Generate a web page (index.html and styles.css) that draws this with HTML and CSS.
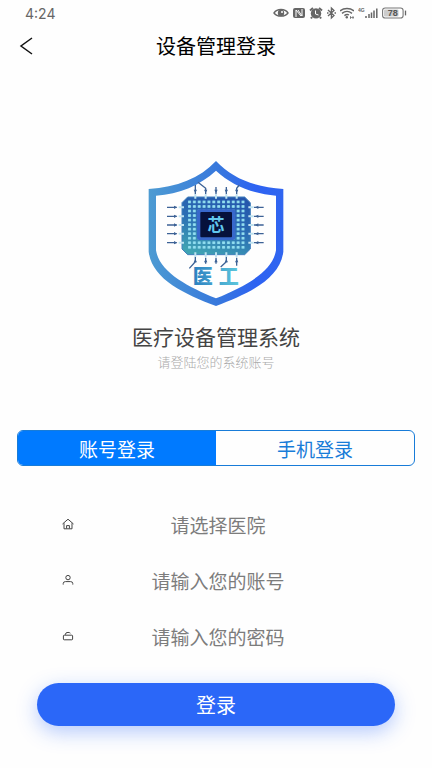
FILE: index.html
```
<!DOCTYPE html>
<html lang="zh-CN">

<head>
    <meta charset="UTF-8">
    <meta name="viewport" content="width=device-width, initial-scale=1.0">
    <title>设备管理登录</title>
    <link rel="stylesheet" href="styles.css">
</head>

<body>
    <div class="status-bar">
        <span class="time">4:24</span>
        <div class="status-icons">
            <svg width="16" height="14" viewBox="0 0 16 14">
                <path d="M1 7C4 2.4 12 2.4 15 7C12 11.2 4 11.2 1 7Z" fill="none" stroke="#666" stroke-width="1.4" />
                <circle cx="8" cy="7" r="3.2" fill="#666" />
                <circle cx="9" cy="6" r="1" fill="#fff" />
            </svg>
            <svg width="12" height="14" viewBox="0 0 12 14">
                <rect y="2" width="12" height="10" rx="2" fill="#666" />
                <path d="M3 11V4L8 10M5 4L9 10V3" fill="none" stroke="#fff" />
            </svg>
            <svg width="14" height="14" viewBox="0 0 14 14">
                <circle cx="7" cy="7.4" r="5.2" fill="#666" />
                <path d="M1 4.5L4 2M13 4.5L10 2M3 11L2 12.5M11 11L12 12.5" stroke="#666" stroke-width="2" />
                <path d="M6.5 4.5V8L9.5 9" fill="none" stroke="#fff" />
            </svg>
            <svg width="9" height="14" viewBox="0 0 9 14">
                <path d="M1 4L7 9.6L4.4 12V2L7 4.4L1 10M0 7H1.5M7.5 7H9" fill="none" stroke="#666" stroke-width="1.3" />
            </svg>
            <svg width="14" height="14" viewBox="0 0 14 14">
                <path d="M0 5C4 1.6 10 1.6 14 5M2 7.4C5 5 9 5 12 7.4M4.4 9.6C6 8.4 8 8.4 9 9" fill="none" stroke="#666" stroke-width="1.4" />
                <circle cx="6.8" cy="11.2" r="1.2" fill="#666" />
                <path d="M10 11.5H14M10.5 10V13M13 10V13" stroke="#666" stroke-width="0.7" />
            </svg>
            <svg width="20" height="14" viewBox="0 0 20 14">
                <text class="net" x="0" y="6">4G</text>
                <path d="M8 12V10M11 12V8M13.5 12V6.5M16 12V4.5M18.8 12V2.5" stroke="#666" stroke-width="1.5" />
            </svg>
            <svg width="25" height="14" viewBox="0 0 25 14">
                <rect x="0.6" y="2" width="20.5" height="10" rx="2.6" fill="#fff" stroke="#777" stroke-width="1.1" />
                <rect x="2" y="3.4" width="14.5" height="7.2" rx="1" fill="#ccc" />
                <path d="M23.5 4.6V9.4" stroke="#666" stroke-width="1.3" />
                <text class="battery" x="10.8" y="10.2">78</text>
            </svg>
        </div>
    </div>

    <header class="nav">
        <button type="button" class="back" aria-label="返回">
            <svg width="14" height="18" viewBox="0 0 14 18">
                <path d="M13 1L2 9L13 17" fill="none" stroke="#111" stroke-width="1.5" />
            </svg>
        </button>
        <h1>设备管理登录</h1>
    </header>

    <main>
        <div class="brand">
            <svg class="logo" width="152" height="155" viewBox="0 0 456 465">
                <defs>
                    <linearGradient id="shield" x1="0" x2="1">
                        <stop offset="0" stop-color="#4d9bd2" />
                        <stop offset="0.5" stop-color="#3879dc" />
                        <stop offset="0.8" stop-color="#2d62f2" />
                        <stop offset="1" stop-color="#3065f0" />
                    </linearGradient>
                    <linearGradient id="chip" x1="0.7" y1="0" x2="0.3" y2="1">
                        <stop offset="0" stop-color="#2456ac" />
                        <stop offset="0.5" stop-color="#2b6fb4" />
                        <stop offset="1" stop-color="#3fa3b3" />
                    </linearGradient>
                    <linearGradient id="word" x1="0" x2="1">
                        <stop offset="0" stop-color="#2b7fc0" />
                        <stop offset="1" stop-color="#5cc6dc" />
                    </linearGradient>
                    <pattern id="dots" x="141" y="134" width="14.6" height="13.6" patternUnits="userSpaceOnUse">
                        <rect x="3" y="2.5" width="9" height="8.5" rx="2" fill="#92dff0" />
                    </pattern>
                </defs>
                <path d="M228 18C180 70 110 97 26 102V290C36 372 130 416 228 453C326 416 420 372 430 290V102C346 97 276 70 228 18ZM228 47C276 91 338 117 408 122V286C398 350 316 394 228 430C140 394 58 350 48 286V122C118 117 180 91 228 47Z" fill="url(#shield)" fill-rule="evenodd" />
                <!-- pins -->
                <g fill="none" stroke="#3c6296" stroke-width="4">
                    <path d="M166 90V118M174 82L197 100V118M228 96V118M259 96V118M298 90L290 100V118" />
                    <path d="M166 306V320L148 340M197 308V326M228 308V326M259 306V320L242 336M290 308V332" />
                    <path d="M81 157H110M81 184H110M81 210H110M81 236H110M81 263H110" />
                    <path d="M342 157H371M342 184H371M342 210H371M342 236H371M342 263H371" />
                </g>
                <g fill="#3c6296">
                    <path d="M161 104h10l-5 10zM192 104h10l-5 10zM223 104h10l-5 10zM254 104h10l-5 10zM285 104h10l-5 10z" />
                    <path d="M161 322h10l-5-10zM192 322h10l-5-10zM223 322h10l-5-10zM254 322h10l-5-10zM285 322h10l-5-10z" />
                    <path d="M102 152v10l10-5zM102 179v10l10-5zM102 205v10l10-5zM102 231v10l10-5zM102 258v10l10-5z" />
                    <path d="M355 152v10l-10-5zM355 179v10l-10-5zM355 205v10l-10-5zM355 231v10l-10-5zM355 258v10l-10-5z" />
                </g>
                <path d="M143 126H314L331 143V282L314 299H143L126 282V143Z" fill="url(#chip)" stroke="#4380bd" stroke-width="3" />
                <rect x="141" y="134" width="175.2" height="149.6" fill="url(#dots)" />
                <g stroke="#bfe3f1" stroke-width="6">
                    <path d="M166 118V131M197 118V131M228 118V131M259 118V131M290 118V131" />
                    <path d="M166 292V306M197 292V306M228 292V306M259 292V306M290 292V306" />
                    <path d="M116 157H132M116 184H132M116 210H132M116 236H132M116 263H132" />
                    <path d="M325 157H341M325 184H341M325 210H341M325 236H341M325 263H341" />
                </g>
                <rect x="171" y="163" width="115" height="92" rx="7" fill="#3868cb" />
                <rect x="181" y="171" width="95" height="76" rx="3" fill="#06113b" />
                <text class="core" x="228" y="229">芯</text>
                <text class="word" y="386"><tspan x="188">医</tspan><tspan x="266">工</tspan></text>
            </svg>
            <h2>医疗设备管理系统</h2>
            <p>请登陆您的系统账号</p>
        </div>

        <div class="tabs">
            <button type="button" class="tab active">账号登录</button>
            <button type="button" class="tab">手机登录</button>
        </div>

        <form class="login-form">
            <div class="field">
                <label for="hospital" aria-label="医院">
                    <svg width="12" height="12" viewBox="0 0 12 12">
                        <path d="M0.5 6L6 1.2L11.5 6M2 5.2V10.8H10V5.2M4.6 10.5V7.6H7.4V10.5" />
                    </svg>
                </label>
                <select id="hospital">
                    <option>请选择医院</option>
                </select>
            </div>
            <div class="field">
                <label for="account" aria-label="账号">
                    <svg width="12" height="12" viewBox="0 0 12 12">
                        <circle cx="6" cy="3.6" r="2.2" />
                        <path d="M1.2 10.6V9.6Q1.2 7.6 3.4 7.6H8.6Q10.8 7.6 10.8 9.6V10.6" />
                    </svg>
                </label>
                <input type="text" id="account" placeholder="请输入您的账号">
            </div>
            <div class="field">
                <label for="password" aria-label="密码">
                    <svg width="12" height="12" viewBox="0 0 12 12">
                        <rect x="1.4" y="5.2" width="9.2" height="4.6" rx="0.8" />
                        <path d="M3.4 5V4.4Q3.4 2.4 6 2.4Q7.6 2.4 8.4 3.2" />
                    </svg>
                </label>
                <input type="password" id="password" placeholder="请输入您的密码">
            </div>
            <button type="submit" class="submit">登录</button>
        </form>
    </main>
</body>

</html>
```
FILE: styles.css
```
* {
    padding: 0;
    margin: 0;
    box-sizing: border-box;
    font-family: "Noto Sans CJK SC", sans-serif;
}

body {
    background-color: #fefefe;
}

svg {
    display: block;
}

button {
    border: none;
    background: none;
    cursor: pointer;
}

.status-bar {
    display: flex;
    justify-content: space-between;
    align-items: center;
    height: 26px;
    padding: 0 25px;
}

.time {
    font-family: Inter, sans-serif;
    font-size: 14px;
    color: #666;
}

.status-icons {
    display: flex;
    gap: 4px;
}

.net {
    font: bold 5px "Liberation Sans", sans-serif;
    fill: #666;
}

.battery {
    font: bold 9px "Liberation Sans", sans-serif;
    fill: #555;
    text-anchor: middle;
}

.nav {
    display: grid;
    grid-template-columns: 36px 1fr 36px;
    align-items: center;
    height: 40px;
    padding: 0 8px;
}

.back {
    display: flex;
    justify-content: center;
    align-items: center;
    height: 36px;
}

h1 {
    font-size: 20px;
    line-height: 30px;
    font-weight: 400;
    text-align: center;
    color: #000;
}

.brand {
    display: flex;
    flex-direction: column;
    align-items: center;
    margin-top: 89px;
}

.core {
    font-size: 51px;
    font-weight: bold;
    fill: #62c8ee;
    text-anchor: middle;
}

.word {
    font-size: 60px;
    font-weight: 900;
    fill: url(#word);
    text-anchor: middle;
}

h2 {
    margin-top: 11px;
    font-size: 21px;
    line-height: 30px;
    font-weight: 400;
    color: #444;
}

.brand p {
    margin-top: 1px;
    font-size: 13px;
    line-height: 20px;
    font-weight: 300;
    color: #aaa;
}

.tabs {
    display: flex;
    height: 36px;
    margin: 58px 17px 0;
    border: 1px solid #187cd8;
    border-radius: 6px;
    overflow: hidden;
}

.tab {
    flex: 1;
    font-size: 19px;
    color: #187cd8;
}

.tab.active {
    background-color: #007aff;
    color: #fff;
}

.login-form {
    margin-top: 30px;
    padding-bottom: 40px;
}

.field {
    display: flex;
    align-items: center;
    height: 56px;
    padding: 0 70px 0 62px;
}

.field svg {
    fill: none;
    stroke: #444;
}

.field input,
.field select {
    flex: 1;
    min-width: 0;
    height: 40px;
    border: none;
    outline: none;
    background: none;
    appearance: none;
    font-size: 19px;
    text-align: center;
    text-align-last: center;
    color: #7c7c7c;
}

.field input::placeholder {
    color: #7c7c7c;
}

.submit {
    display: block;
    width: calc(100% - 74px);
    height: 43px;
    margin: 19px auto 0;
    border-radius: 24px;
    background-color: #2b67f8;
    box-shadow: 0 6px 20px rgba(43, 103, 248, 0.35);
    font-size: 20px;
    color: #fff;
}
```
